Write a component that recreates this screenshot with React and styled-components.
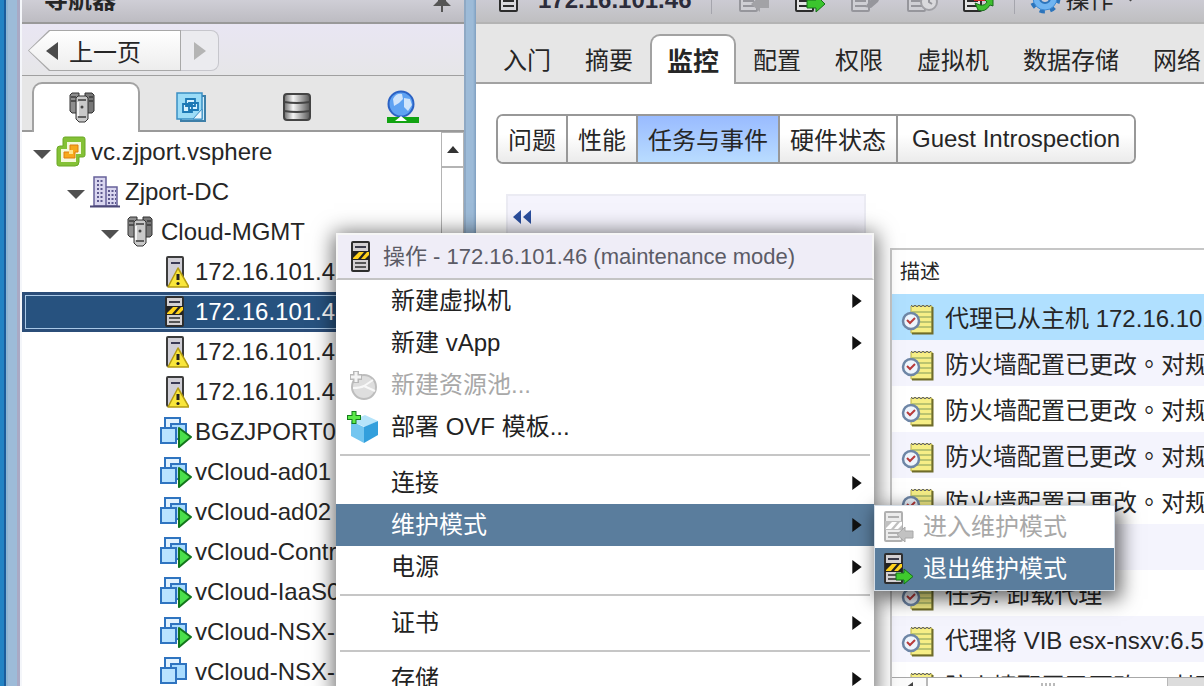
import React from "react";
import styled, { createGlobalStyle, css } from "styled-components";

const GlobalStyle = createGlobalStyle`
  *, *::before, *::after { box-sizing: border-box; }
  body {
    margin: 0;
    overflow: hidden;
    background: #fff;
    color: #262626;
    font: 24px/28px "Liberation Sans", "Noto Sans CJK SC", sans-serif;
  }
  button { font: inherit; color: inherit; margin: 0; border: 0; padding: 0; background: none; }
  ul { list-style: none; margin: 0; padding: 0; }
  svg { display: block; flex: none; }
`;

const Shell = styled.div`
  position: relative;
  display: flex;
  height: 100vh;
  overflow: hidden;
  background: #9dbbd8;
`;

const WindowFrame = styled.div`
  flex: none;
  width: 22px;
  background: linear-gradient(90deg, #2383c4 0 4px, #1a5c9c 4px 6px, #8fb4d2 6px 8px, #9dbbd8 8px 17px, #a9a9c4 17px 20px, #f4f6fa 20px);
`;

const Sidebar = styled.aside`
  display: flex;
  flex-direction: column;
  flex: none;
  width: 442px;
  background: #fff;
`;

const TitleBar = styled.header`
  display: flex;
  align-items: flex-end;
  justify-content: space-between;
  flex: none;
  height: 24px;
  padding: 0 12px 8px 22px;
  border-bottom: 2px solid #999;
  background: linear-gradient(#cfced6, #bdbcc2);
  font-weight: bold;
`;

const History = styled.nav`
  display: flex;
  align-items: center;
  flex: none;
  height: 52px;
  padding: 2px 0 0 6px;
  border-bottom: 1px solid #a0a0a0;
  background: linear-gradient(#e9e6f3, #e6e6e8);
`;

const BackButton = styled.button`
  position: relative;
  display: flex;
  align-items: center;
  gap: 8px;
  width: 153px;
  height: 41px;
  padding-left: 15px;
  background: #a8a8a8;
  clip-path: polygon(21px 0, 100% 0, 100% 100%, 21px 100%, 0 50%);
  &::before {
    content: "";
    position: absolute;
    inset: 1px;
    background: linear-gradient(#fff, #ededed);
    clip-path: polygon(21px 0, 100% 0, 100% 100%, 21px 100%, 0 50%);
  }
  & > * { position: relative; }
`;

const BackLabel = styled.span`
  padding-top: 4px;
`;

const ForwardButton = styled.button`
  display: grid;
  place-items: center;
  width: 38px;
  height: 41px;
  border: 1px solid #c6c6cc;
  border-left: 0;
  border-radius: 0 8px 8px 0;
  background: #ebebef;
`;

const ViewTabs = styled.div`
  display: flex;
  align-items: flex-end;
  flex: none;
  height: 56px;
  padding-left: 10px;
  background: linear-gradient(#e6e6e6 0 54px, #9a9a9a 54px);
`;

const ViewTab = styled.button`
  display: grid;
  place-items: center;
  width: 106px;
  height: 50px;
  padding-right: 4px;
  border-radius: 10px 10px 0 0;
  ${(p) => p.$active && css`
    width: 108px;
    padding-right: 8px;
    border: 2px solid #a2a2a2;
    border-bottom: 0;
    background: #fff;
  `}
`;

const TreePane = styled.div`
  display: flex;
  flex: 1;
  min-height: 0;
`;

const Tree = styled.ul`
  flex: 1;
  overflow: hidden;
`;

const TreeRow = styled.li`
  display: flex;
  align-items: center;
  gap: ${(p) => (p.$depth > 1 ? 6 : 5)}px;
  height: 40px;
  padding-left: ${(p) => 11 + p.$depth * 34}px;
  white-space: nowrap;
  ${(p) => p.$selected && css`
    margin-right: -24px;
    color: #fff;
    background: #27527f;
    border: 3px solid #2b4d78;
    border-right: 0;
    padding-left: ${8 + p.$depth * 34}px;
    box-shadow: inset 1px 1px #a9c8e6, inset 0 -1px #a9c8e6;
  `}
`;

const Twisty = styled.span`
  width: 18px;
  height: 9px;
  margin-top: 5px;
  background: ${(p) => (p.$open ? "#505050" : "transparent")};
  clip-path: polygon(0 0, 100% 0, 50% 100%);
`;

const IconSlot = styled.span`
  display: grid;
  place-items: center;
  flex: none;
  width: 30px;
  height: 32px;
`;

const VerticalScroll = styled.div`
  flex: none;
  width: 23px;
  border: 1px solid #b4b4b4;
  background: #fff;
`;

const ScrollUp = styled.button`
  display: grid;
  place-items: center;
  width: 100%;
  height: 35px;
  border-bottom: 2px solid #b4b4b4;
`;

const Splitter = styled.div`
  flex: none;
  width: 12px;
  background: linear-gradient(90deg, #8fa9c4 0 2px, #9dbbd8 2px 9px, #7f9fc0);
`;

const Main = styled.main`
  display: flex;
  flex-direction: column;
  flex: 1;
  min-width: 0;
  overflow: hidden;
  background: #fff;
`;

const Toolbar = styled.header`
  display: flex;
  align-items: flex-end;
  flex: none;
  height: 24px;
  padding: 0 0 8px 23px;
  border-bottom: 2px solid #b4b4b4;
  background: linear-gradient(#cccbd3, #bfbfc1);
  white-space: nowrap;
`;

const ObjectName = styled.strong`
  margin: 0 20px 0 20px;
  color: #2c2c3a;
`;

const ToolDivider = styled.span`
  width: 1px;
  height: 30px;
  background: #a5a5ad;
`;

const ToolGroup = styled.div`
  display: flex;
  gap: 24px;
  padding: 0 20px 0 26px;
`;

const ActionsButton = styled.button`
  display: flex;
  align-items: flex-end;
  gap: 4px;
  padding-left: 14px;
`;

const Caret = styled.span`
  align-self: center;
  width: 14px;
  height: 7px;
  margin-left: 6px;
  background: #444;
  clip-path: polygon(0 0, 100% 0, 50% 100%);
`;

const Tabs = styled.nav`
  display: flex;
  align-items: flex-end;
  flex: none;
  height: 60px;
  padding-left: 10px;
  background: linear-gradient(#e6e6e6 0 58px, #a2a2a2 58px);
`;

const Tab = styled.button`
  flex: none;
  height: 50px;
  padding: 4px 17px 0;
  white-space: nowrap;
  ${(p) => p.$active && css`
    padding: 4px 15px 0;
    border: 2px solid #a2a2a2;
    border-bottom: 0;
    border-radius: 10px 10px 0 0;
    background: #fff;
    font-size: 26px;
    font-weight: bold;
  `}
`;

const Segments = styled.div`
  display: flex;
  align-self: flex-start;
  flex: none;
  margin: 30px 0 0 20px;
  border: 2px solid #989898;
  border-radius: 7px;
  overflow: hidden;
`;

const Segment = styled.button`
  height: 46px;
  padding: ${(p) => (p.$wide ? "0 14px" : "4px 10px 0")};
  background: ${(p) => (p.$active ? "linear-gradient(#99bbff, #b9dcff)" : "linear-gradient(#fff 40%, #ebebeb)")};
  white-space: nowrap;
  & + & { border-left: 2px solid #989898; }
`;

const Workspace = styled.div`
  display: flex;
  align-items: stretch;
  flex: 1;
  gap: 24px;
  min-height: 0;
  padding: 30px 0 0 30px;
`;

const CollapsedPanel = styled.section`
  flex: none;
  width: 360px;
  padding: 6px 5px;
  border: 2px solid #ebebf3;
  background: #f5f4fd;
`;

const Events = styled.section`
  display: flex;
  flex-direction: column;
  flex: 1;
  min-width: 0;
  margin-top: 54px;
  border: 2px solid #c6c6c6;
  border-right: 0;
  border-bottom: 0;
`;

const EventScroller = styled.div`
  flex: 1;
  min-height: 0;
  overflow: hidden;
`;

const EventTable = styled.table`
  width: 100%;
  border-collapse: collapse;
  table-layout: fixed;
  text-align: left;
  white-space: nowrap;
  th {
    height: 44px;
    padding: 0 8px;
    font-size: 20px;
    font-weight: normal;
  }
  td {
    height: 46px;
    padding: 4px 0 0 9px;
    font-family: "Liberation Sans", "Noto Sans CJK TC", sans-serif;
  }
`;

const EventRow = styled.tr`
  background: ${(p) => (p.$selected ? "#b0e0ff" : "#fff")};
  &:nth-child(even) { background: #f4f4fd; }
`;

const EventCell = styled.div`
  display: flex;
  align-items: center;
  gap: 11px;
  overflow: hidden;
`;

const HorizontalScroll = styled.div`
  display: flex;
  flex: none;
  height: 9px;
  overflow: hidden;
  border-top: 1px solid #a8a8a8;
  background: #dcdcdc;
`;

const ScrollLeft = styled.button`
  display: grid;
  place-items: center;
  width: 36px;
  height: 20px;
  border-right: 2px solid #b8b8b8;
  background: #fbfbfb;
`;

const Thumb = styled.div`
  display: grid;
  place-items: center;
  width: 240px;
  height: 20px;
  border-right: 1px solid #b8b8b8;
  background: #fff;
`;

const Menu = styled.div`
  position: absolute;
  left: 336px;
  top: 233px;
  width: 538px;
  background: #fff;
  box-shadow: 0 2px 20px 2px rgba(0, 0, 0, 0.6);
`;

const MenuTitle = styled.div`
  display: flex;
  align-items: center;
  gap: 12px;
  height: 47px;
  padding: 0 12px;
  border: 2px solid #f6f6f6;
  border-bottom: 2px solid #c4c4c4;
  background: #efedf7;
  color: #5b5b66;
  font-size: 22px;
`;

const MenuRow = styled.li`
  position: relative;
`;

const MenuItem = styled.button`
  display: flex;
  align-items: center;
  gap: 10px;
  width: 100%;
  height: 42px;
  padding: 0 10px 0 8px;
  text-align: left;
  white-space: nowrap;
  color: ${(p) => (p.$active ? "#fff" : p.disabled ? "#a8a8a8" : "#222")};
  background: ${(p) => (p.$active ? "#5a7d9d" : "transparent")};
`;

const MenuIcon = styled.span`
  display: grid;
  place-items: center;
  flex: none;
  width: ${(p) => (p.$narrow ? 30 : 37)}px;
`;

const MenuLabel = styled.span`
  flex: 1;
`;

const MenuRule = styled.li`
  height: 14px;
  padding: 6px 4px;
  &::before {
    content: "";
    display: block;
    height: 2px;
    background: #c6c6c6;
  }
`;

const Submenu = styled.ul`
  position: absolute;
  left: 100%;
  top: 1px;
  width: 241px;
  border: 1px solid #d4dde6;
  background: #fff;
  box-shadow: 4px 6px 18px 2px rgba(0, 0, 0, 0.6);
`;

const Triangle = ({ dir, size = 12, color = "#111" }) => {
  const points = {
    right: "2,0 10,6 2,12",
    left: "10,0 2,6 10,12",
    up: "0,9 6,2 12,9",
  };
  return (
    <svg width={size} height={size} viewBox="0 0 12 12" aria-hidden="true">
      <polygon points={points[dir]} fill={color} />
    </svg>
  );
};

const ServerBody = ({ dim }) => (
  <>
    <rect x="2" y="1" width="17" height="29" rx="1" fill={dim ? "#ececec" : "#d3d0d2"} stroke={dim ? "#b0b0b0" : "#2e2e2e"} strokeWidth="2" />
    <path d="M5 6h11" stroke={dim ? "#b0b0b0" : "#3a3a48"} strokeWidth="2" />
    <path d="M5 22h11M5 26h11" stroke={dim ? "#b0b0b0" : "#555"} strokeWidth="2" />
  </>
);

const Stripes = ({ dim }) => (
  <>
    <rect x="2" y="10" width="17" height="9" fill={dim ? "#c0c0c0" : "#222"} />
    <path d="M3 17l6-6h5l-6 7H3zM11 18l6-7h2v3l-4 4z" fill={dim ? "#fff" : "#ffd21c"} />
  </>
);

const MaintenanceHost = () => (
  <svg width="21" height="32" viewBox="0 0 21 32" aria-hidden="true">
    <ServerBody />
    <Stripes />
  </svg>
);

const WarningHost = () => (
  <svg width="30" height="32" viewBox="-6 0 30 32" aria-hidden="true">
    <rect x="2" y="1" width="16" height="29" rx="1" fill="#d0cfd6" stroke="#3c3c3c" strokeWidth="2" />
    <path d="M6 7h9" stroke="#3a3a55" strokeWidth="2" />
    <path d="M13 12L24 31H3z" fill="#f9e63a" stroke="#b39b12" strokeWidth="1.5" strokeLinejoin="round" />
    <path d="M13 18v6" stroke="#222" strokeWidth="3" />
    <circle cx="13" cy="27.5" r="1.6" fill="#222" />
  </svg>
);

const MaintenanceArrow = ({ dim, back }) => (
  <svg width="31" height="32" viewBox="0 0 31 32" aria-hidden="true">
    <ServerBody dim={dim} />
    <Stripes dim={dim} />
    <path
      d={back ? "M30 20v7h-8v4l-8-7.500 8-7.500v4z" : "M13 20h8v-4l9 7.500-9 7.500v-4h-8z"}
      fill={dim ? "#c2c2c2" : "#3fc92d"}
      stroke={dim ? "#a8a8a8" : "#15711a"}
    />
  </svg>
);

const Cluster = () => (
  <svg width="28" height="32" viewBox="0 0 28 32" aria-hidden="true">
    <g stroke="#333">
      <path d="M2 3l2-2h7v20H4l-2-2z" fill="#8e8e8e" />
      <path d="M17 1h7l2 2v16l-2 2h-7z" fill="#777" />
      <path d="M8 6l2-2h8l2 2v21l-3 3h-6l-3-3z" fill="#c9c9c9" />
    </g>
    <path d="M3 5h5M3 9h5M21 5h4M21 9h4M10 8h8M10 25h8" stroke="#3c3c3c" strokeWidth="1.5" />
    <path d="M10 10v14" stroke="#f2f2f2" strokeWidth="2" />
    <circle cx="14" cy="15" r="1.5" fill="#444" />
  </svg>
);

const VirtualMachine = ({ running }) => (
  <svg width="34" height="32" viewBox="0 0 34 32" aria-hidden="true">
    <g stroke="#2f74c0" strokeWidth="2">
      <rect x="6" y="2" width="15" height="13" fill="#e3f3ff" />
      <rect x="12" y="8" width="15" height="15" fill="#a9dcff" />
      <rect x="2" y="12" width="15" height="15" fill="#b9e3ff" />
    </g>
    {running && <path d="M20 12l12 9-12 10z" fill="#4be04b" stroke="#13761c" strokeWidth="2" strokeLinejoin="round" />}
  </svg>
);

const VCenter = () => (
  <svg width="30" height="32" viewBox="0 0 30 32" aria-hidden="true">
    <path d="M9 1h18q2 0 2 2v16q0 2-2 2h-4v5q0 4-4 4H3q-2 0-2-2V13q0-3 3-3h3V3q0-2 2-2z" fill="#84c136" stroke="#6aa824" />
    <path d="M11 6h14v12h-5v8H5V13h6z" fill="#f4f9dc" />
    <path d="M14 9h8v7h-3v6H8v-6h6z" fill="#f7a81b" stroke="#dd7c10" />
    <path d="M13 14h4v4h-4z" fill="#ffe48a" />
  </svg>
);

const Datacenter = () => (
  <svg width="30" height="32" viewBox="0 0 30 32" aria-hidden="true">
    <path d="M4 1h12v29H4zM16 11h11v19H16z" fill="#d9d6ef" stroke="#67629a" strokeWidth="1.5" />
    <path d="M7 5h7M7 9h7M7 13h7M7 17h7M7 21h7M7 25h7M18 15h8M18 19h8M18 23h8M18 27h8" stroke="#5d588e" strokeWidth="2" strokeDasharray="2 1.5" />
    <path d="M0 30.5h30" stroke="#4c4878" strokeWidth="2" />
  </svg>
);

const TemplatesView = () => (
  <svg width="30" height="30" viewBox="0 0 30 30" aria-hidden="true">
    <rect x="5" y="4" width="24" height="25" fill="#d3eefb" stroke="#3e7fa8" strokeWidth="2" />
    <path d="M1 1h25v26H1z" fill="#9bdcf7" stroke="#3a8fc4" strokeWidth="1.5" />
    <path d="M10 7h9v7h-9zM7 12h9v8H7zM13 11h9v7h-9z" fill="#d9f3ff" stroke="#1d79b5" strokeWidth="1.8" />
    <path d="M26 17l-9 10h9z" fill="#eaf6fd" stroke="#3a8fc4" />
  </svg>
);

const StorageView = () => (
  <svg width="30" height="28" viewBox="0 0 30 28" aria-hidden="true">
    <defs>
      <linearGradient id="metal">
        <stop offset="0" stopColor="#6a6a6a" />
        <stop offset="0.35" stopColor="#f5f5f5" />
        <stop offset="1" stopColor="#555" />
      </linearGradient>
    </defs>
    <rect x="2" y="1" width="26" height="26" rx="3" fill="url(#metal)" stroke="#444" strokeWidth="2" />
    <path d="M2 9q13 2 26 0M2 18q13 2 26 0" fill="none" stroke="#444" strokeWidth="2" />
  </svg>
);

const NetworkView = () => (
  <svg width="34" height="34" viewBox="0 0 34 34" aria-hidden="true">
    <circle cx="15" cy="14" r="12.5" fill="#5ea2f2" stroke="#2b62c4" strokeWidth="2" />
    <path d="M7 9q3-6 9-5l1 5-4 4-5 3zM18 8l6 1 2 6-4 6-4-4z" fill="#cfe4fb" />
    <path d="M1 30h32" stroke="#12a312" strokeWidth="6" />
    <path d="M9 31l6-5 6 5z" fill="#fff" />
  </svg>
);

const EventIcon = () => (
  <svg width="33" height="32" viewBox="0 0 33 32" aria-hidden="true">
    <path d="M10 3h21v27H10z" fill="#f6ee86" stroke="#b6ad45" />
    <path d="M11 9h20M11 14h20M11 19h20M11 24h20" stroke="#a8b768" strokeWidth="1.5" />
    <path d="M31.500 4v26.500H11" fill="none" stroke="#6f6c2b" strokeWidth="2" />
    <path d="M10 2l2 2 2-2 2 2 2-2 2 2 2-2 2 2 2-2 2 2 2-2" fill="none" stroke="#666" />
    <circle cx="10" cy="18" r="8" fill="#eef5fd" stroke="#6e86a6" strokeWidth="2.5" />
    <path d="M6 17l3 3 5-5" fill="none" stroke="#b83a3a" strokeWidth="2" />
  </svg>
);

const Pin = () => (
  <svg width="20" height="22" viewBox="0 0 20 22" aria-hidden="true">
    <path d="M6 0h8v9l5 5H1l5-5z" fill="#555" />
    <path d="M10 12v8" stroke="#555" strokeWidth="2" />
  </svg>
);

const HostAction = ({ kind }) => {
  const live = kind === "exit" || kind === "restart";
  const ink = live ? "#2c2c2c" : "#96969c";
  return (
    <svg width="32" height="30" viewBox="0 0 32 30" aria-hidden="true">
      <rect x="2" y="0" width="17" height="27" rx="1" fill={live ? "#e4e4e4" : "#cfcfd4"} stroke={ink} strokeWidth="2" />
      <path d="M5 17h11M5 22h11" stroke={ink} strokeWidth="2" />
      {kind === "enter" && <path d="M31 16v8h-9v4l-9-8 9-8v4z" fill="#a2a2a6" />}
      {kind === "exit" && <path d="M13 16h9v-5l9 9-9 8v-4h-9z" fill="#3bc52d" stroke="#16701a" />}
      {kind === "connect" && <path d="M15 23l7-9 9-2-3 6-7 6z" fill="#96969c" />}
      {kind === "clock" && (
        <>
          <circle cx="23" cy="18" r="8" fill="#d9d9dc" stroke="#a0a0a5" strokeWidth="2" />
          <path d="M23 13v5l3 2" stroke="#96969c" strokeWidth="2" fill="none" />
        </>
      )}
      {kind === "restart" && (
        <>
          <path d="M12 9h12v8H12z" fill="#cf2727" />
          <path d="M13 19l5 2q5 1 7-3l-2-2 8-3v9l-3-1q-5 8-12 5z" fill="#3fbf2f" stroke="#186c1a" />
        </>
      )}
    </svg>
  );
};

const Gear = () => (
  <svg width="32" height="32" viewBox="-16 -16 32 32" aria-hidden="true">
    <circle r="13" fill="none" stroke="#2c74bb" strokeWidth="5" strokeDasharray="5.1 5.1" />
    <circle r="12" fill="#6fb4f1" stroke="#3e8bd4" />
    <circle r="5" fill="#cfcfd8" stroke="#2c74bb" strokeWidth="2" />
  </svg>
);

const ResourcePool = () => (
  <svg width="30" height="30" viewBox="0 0 30 30" aria-hidden="true">
    <circle cx="16" cy="17" r="12" fill="#dedede" stroke="#bdbdbd" strokeWidth="2" />
    <path d="M5 18q7 0 11-2l9-6M16 16l11 5" fill="none" stroke="#f8f8f8" strokeWidth="2" />
    <path d="M8 1v12M2 7h12" stroke="#b8b8b8" strokeWidth="6" />
    <path d="M8 2v10M3 7h10" stroke="#f4f4f4" strokeWidth="3" />
  </svg>
);

const OvfTemplate = () => (
  <svg width="34" height="34" viewBox="0 0 34 34" aria-hidden="true">
    <path d="M5 11l14-6 13 6-13 6z" fill="#b5e4fa" />
    <path d="M5 11l13 6v16L5 26z" fill="#73c6f0" />
    <path d="M32 11l-14 6v16l14-8z" fill="#329fdc" />
    <path d="M8 1v13M1 7.5h14" stroke="#167e1c" strokeWidth="5" />
    <path d="M8 2v11M2 7.5h12" stroke="#5dea4a" strokeWidth="3" />
  </svg>
);

const Rewind = () => (
  <svg width="20" height="14" viewBox="0 0 20 14" aria-hidden="true">
    <path d="M8 0v14L0 7zM18 0v14l-8-7z" fill="#2b4f9e" />
  </svg>
);

const Grip = () => (
  <svg width="16" height="10" viewBox="0 0 16 10" aria-hidden="true">
    <path d="M2 0v10M6 0v10M10 0v10M14 0v10" stroke="#777" />
  </svg>
);

const inventory = [
  { label: "vc.zjport.vsphere", depth: 0, open: true, icon: <VCenter /> },
  { label: "Zjport-DC", depth: 1, open: true, icon: <Datacenter /> },
  { label: "Cloud-MGMT", depth: 2, open: true, icon: <Cluster /> },
  { label: "172.16.101.4", depth: 3, icon: <WarningHost /> },
  { label: "172.16.101.4", depth: 3, icon: <MaintenanceHost />, selected: true },
  { label: "172.16.101.4", depth: 3, icon: <WarningHost /> },
  { label: "172.16.101.4", depth: 3, icon: <WarningHost /> },
  { label: "BGZJPORT0", depth: 3, icon: <VirtualMachine running /> },
  { label: "vCloud-ad01", depth: 3, icon: <VirtualMachine running /> },
  { label: "vCloud-ad02", depth: 3, icon: <VirtualMachine running /> },
  { label: "vCloud-Contr", depth: 3, icon: <VirtualMachine running /> },
  { label: "vCloud-IaaS0", depth: 3, icon: <VirtualMachine running /> },
  { label: "vCloud-NSX-", depth: 3, icon: <VirtualMachine running /> },
  { label: "vCloud-NSX-", depth: 3, icon: <VirtualMachine /> },
];

const views = [
  { name: "主机和群集", icon: <Cluster /> },
  { name: "虚拟机和模板", icon: <TemplatesView /> },
  { name: "存储", icon: <StorageView /> },
  { name: "网络", icon: <NetworkView /> },
];

const tabs = ["入门", "摘要", "监控", "配置", "权限", "虚拟机", "数据存储", "网络"];
const segments = ["问题", "性能", "任务与事件", "硬件状态", "Guest Introspection"];
const hostActions = ["enter", "exit", "connect", "clock", "restart"];

const firewall = "防火墙配置已更改。对规";
const events = [
  "代理已从主机 172.16.101.46",
  firewall,
  firewall,
  firewall,
  firewall,
  "",
  "任务: 卸载代理",
  "代理将 VIB esx-nsxv:6.5.",
  firewall,
];

const menu = [
  { label: "新建虚拟机", more: true },
  { label: "新建 vApp", more: true },
  { label: "新建资源池...", disabled: true, icon: <ResourcePool /> },
  { label: "部署 OVF 模板...", icon: <OvfTemplate /> },
  null,
  { label: "连接", more: true },
  {
    label: "维护模式",
    more: true,
    active: true,
    children: [
      { label: "进入维护模式", disabled: true, icon: <MaintenanceArrow dim back /> },
      { label: "退出维护模式", active: true, icon: <MaintenanceArrow /> },
    ],
  },
  { label: "电源", more: true },
  null,
  { label: "证书", more: true },
  null,
  { label: "存储", more: true },
];

function MenuEntry({ item, narrow }) {
  return (
    <MenuRow>
      <MenuItem disabled={item.disabled} $active={item.active}>
        <MenuIcon $narrow={narrow}>{item.icon}</MenuIcon>
        <MenuLabel>{item.label}</MenuLabel>
        {item.more && <Triangle dir="right" size={14} />}
      </MenuItem>
      {item.children && (
        <Submenu>
          {item.children.map((child) => <MenuEntry key={child.label} item={child} narrow />)}
        </Submenu>
      )}
    </MenuRow>
  );
}

export default function App() {
  return (
    <>
      <GlobalStyle />
      <Shell>
        <WindowFrame />
        <Sidebar>
          <TitleBar>导航器<Pin /></TitleBar>
          <History>
            <BackButton><Triangle dir="left" size={18} color="#4a4a4a" /><BackLabel>上一页</BackLabel></BackButton>
            <ForwardButton aria-label="前进"><Triangle dir="right" size={18} color="#b4b4b4" /></ForwardButton>
          </History>
          <ViewTabs>
            {views.map((view, i) => (
              <ViewTab key={view.name} $active={i === 0} aria-label={view.name}>{view.icon}</ViewTab>
            ))}
          </ViewTabs>
          <TreePane>
            <Tree>
              {inventory.map((node, i) => (
                <TreeRow key={i} $depth={node.depth} $selected={node.selected}>
                  <Twisty $open={node.open} />
                  <IconSlot>{node.icon}</IconSlot>
                  <span>{node.label}</span>
                </TreeRow>
              ))}
            </Tree>
            <VerticalScroll>
              <ScrollUp aria-label="向上滚动"><Triangle dir="up" color="#333" /></ScrollUp>
            </VerticalScroll>
          </TreePane>
        </Sidebar>
        <Splitter />
        <Main>
          <Toolbar>
            <svg width="19" height="30" viewBox="0 0 19 30" aria-hidden="true">
              <rect x="1" y="1" width="17" height="26" rx="1" fill="#d8d8dc" stroke="#2c2c2c" strokeWidth="2" />
              <path d="M4 17h11M4 22h11" stroke="#2c2c2c" strokeWidth="2" />
            </svg>
            <ObjectName>172.16.101.46</ObjectName>
            <ToolDivider />
            <ToolGroup>
              {hostActions.map((kind) => <HostAction key={kind} kind={kind} />)}
            </ToolGroup>
            <ToolDivider />
            <ActionsButton><Gear />操作<Caret /></ActionsButton>
          </Toolbar>
          <Tabs>
            {tabs.map((name) => <Tab key={name} $active={name === "监控"}>{name}</Tab>)}
          </Tabs>
          <Segments>
            {segments.map((name, i) => (
              <Segment key={name} $active={i === 2} $wide={i === 4}>{name}</Segment>
            ))}
          </Segments>
          <Workspace>
            <CollapsedPanel><button aria-label="折叠"><Rewind /></button></CollapsedPanel>
            <Events>
              <EventScroller>
                <EventTable>
                  <thead><tr><th scope="col">描述</th></tr></thead>
                  <tbody>
                    {events.map((text, i) => (
                      <EventRow key={i} $selected={i === 0}>
                        <td><EventCell><EventIcon /><span>{text}</span></EventCell></td>
                      </EventRow>
                    ))}
                  </tbody>
                </EventTable>
              </EventScroller>
              <HorizontalScroll>
                <ScrollLeft aria-label="向左滚动"><Triangle dir="left" color="#444" /></ScrollLeft>
                <Thumb><Grip /></Thumb>
              </HorizontalScroll>
            </Events>
          </Workspace>
        </Main>
        <Menu>
          <MenuTitle><MaintenanceHost /><MenuLabel>操作 - 172.16.101.46 (maintenance mode)</MenuLabel></MenuTitle>
          <ul>
            {menu.map((item, i) => (item ? <MenuEntry key={i} item={item} /> : <MenuRule key={i} />))}
          </ul>
        </Menu>
      </Shell>
    </>
  );
}
